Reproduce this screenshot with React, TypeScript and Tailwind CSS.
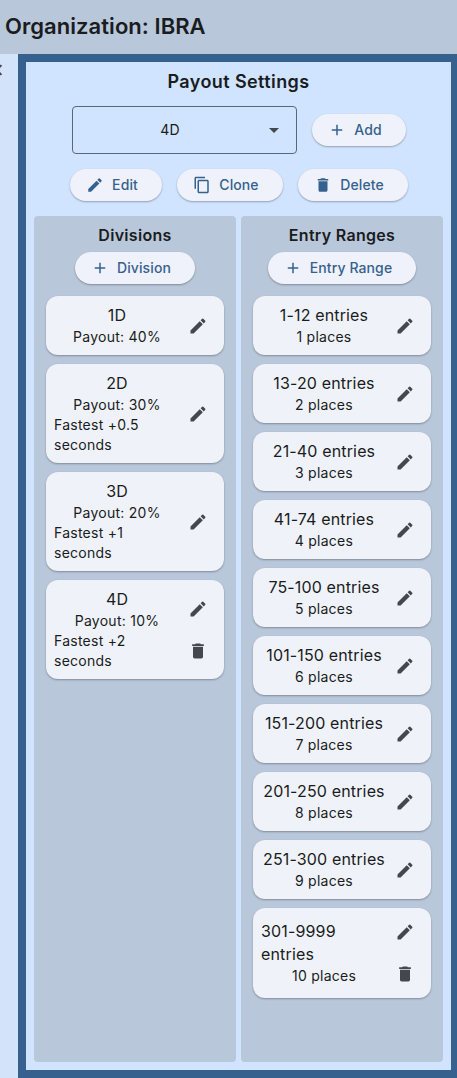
import { MdAdd, MdArrowDropDown, MdChevronLeft, MdContentCopy, MdDelete, MdEdit } from 'react-icons/md';

type Division = { name: string; payout: string; fastest?: string; canDelete?: boolean };

const divisions: Division[] = [
  { name: '1D', payout: 'Payout: 40%' },
  { name: '2D', payout: 'Payout: 30%', fastest: 'Fastest +0.5 seconds' },
  { name: '3D', payout: 'Payout: 20%', fastest: 'Fastest +1 seconds' },
  { name: '4D', payout: 'Payout: 10%', fastest: 'Fastest +2 seconds', canDelete: true },
];

const ranges = [
  ['1-12 entries', '1 places'],
  ['13-20 entries', '2 places'],
  ['21-40 entries', '3 places'],
  ['41-74 entries', '4 places'],
  ['75-100 entries', '5 places'],
  ['101-150 entries', '6 places'],
  ['151-200 entries', '7 places'],
  ['201-250 entries', '8 places'],
  ['251-300 entries', '9 places'],
];

function PillButton({ icon, label, className }: { icon: React.ReactNode; label: string; className: string }) {
  return (
    <button
      className={`flex h-[32px] items-center justify-center rounded-full bg-[#eff2fa] pb-[1px] pr-[8px] text-[14px] font-medium tracking-[0.1px] text-[#36618e] shadow-[0_1px_2px_rgba(0,0,0,0.3)] ${className}`}
    >
      {icon}
      {label}
    </button>
  );
}

function CardActions({ canDelete }: { canDelete?: boolean }) {
  return (
    <div className="flex w-[24px] shrink-0 flex-col items-center gap-[22px] py-[6px] text-[#43474e]">
      <MdEdit size={20} />
      {canDelete && <MdDelete size={20} />}
    </div>
  );
}

function DivisionCard({ division }: { division: Division }) {
  return (
    <div className="flex items-center rounded-[12px] bg-[#f0f2fa] py-[8px] pl-[8px] pr-[14px] text-[#191c20] shadow-[0_1px_2px_rgba(0,0,0,0.3)]">
      <div className="min-w-0 flex-1 pr-[6px]">
        <div className="text-center text-[16px] leading-[23px] tracking-[0.15px]">{division.name}</div>
        <div className="text-center text-[14px] leading-[20px] tracking-[0.25px]">{division.payout}</div>
        {division.fastest && <div className="text-[14px] leading-[20px] tracking-[0.25px]">{division.fastest}</div>}
      </div>
      <CardActions canDelete={division.canDelete} />
    </div>
  );
}

function RangeCard({ title, places, canDelete }: { title: string; places: string; canDelete?: boolean }) {
  return (
    <div className="flex items-center rounded-[12px] bg-[#f0f2fa] py-[8px] pl-[8px] pr-[14px] text-[#191c20] shadow-[0_1px_2px_rgba(0,0,0,0.3)]">
      <div className="min-w-0 flex-1 pr-[6px]">
        <div className={`${canDelete ? 'text-left' : 'text-center'} text-[16px] leading-[23px] tracking-[0.15px]`}>{title}</div>
        <div className="text-center text-[14px] leading-[20px] tracking-[0.25px]">{places}</div>
      </div>
      <CardActions canDelete={canDelete} />
    </div>
  );
}

export default function App() {
  return (
    <div className="flex h-[1078px] w-[457px] flex-col overflow-hidden bg-[#d3e3fa] font-['Inter',sans-serif] text-[#191c20]">
      <header className="flex h-[54px] shrink-0 items-center bg-[#b9c7da] pb-[1px] pl-[5px]">
        <h1 className="text-[22px] font-semibold tracking-[0.05px]">Organization: IBRA</h1>
      </header>
      <div className="flex min-h-0 flex-1">
        <div className="w-[18px] shrink-0 overflow-hidden pt-[5px]">
          <MdChevronLeft size={22} className="ml-[-12px] text-[#43474e]" />
        </div>
        <main className="flex w-[441px] shrink-0 flex-col border-[8px] border-[#36618e] bg-[#d1e4ff] pb-[8px]">
          <h2 className="mt-[8px] text-center text-[18px] font-semibold leading-[24px] tracking-[0.4px]">Payout Settings</h2>
          <div className="mt-[12px] flex items-center pl-[46px]">
            <div className="relative flex h-[48px] w-[225px] items-center justify-center rounded-[4px] border border-[#5b6779] pb-[1px] pr-[29px] text-[14px] tracking-[0.25px] text-[#191c20]">
              4D
              <MdArrowDropDown size={24} className="absolute right-[10px] text-[#43474e]" />
            </div>
            <PillButton icon={<MdAdd size={18} className="mr-[8px]" />} label="Add" className="ml-[15px] w-[94px]" />
          </div>
          <div className="mt-[15px] flex items-center pl-[44px]">
            <PillButton icon={<MdEdit size={18} className="mr-[8px]" />} label="Edit" className="w-[92px]" />
            <PillButton icon={<MdContentCopy size={18} className="mr-[8px]" />} label="Clone" className="ml-[15px] w-[106px]" />
            <PillButton icon={<MdDelete size={18} className="mr-[8px]" />} label="Delete" className="ml-[15px] w-[110px]" />
          </div>
          <div className="mt-[15px] flex min-h-0 flex-1 gap-[5px] px-[8px]">
            <section className="flex w-[202px] flex-col rounded-[4px] bg-[#b9c7da] px-[12px] pt-[8px]">
              <h3 className="text-center text-[16px] font-semibold leading-[22px] tracking-[0.3px]">Divisions</h3>
              <PillButton icon={<MdAdd size={18} className="mr-[8px]" />} label="Division" className="mx-auto mt-[6px] w-[120px]" />
              <div className="mt-[12px] flex flex-col gap-[9px]">
                {divisions.map((d) => (
                  <DivisionCard key={d.name} division={d} />
                ))}
              </div>
            </section>
            <section className="flex w-[202px] flex-col rounded-[4px] bg-[#b9c7da] px-[12px] pt-[8px]">
              <h3 className="text-center text-[16px] font-semibold leading-[22px] tracking-[0.3px]">Entry Ranges</h3>
              <PillButton icon={<MdAdd size={18} className="mr-[8px]" />} label="Entry Range" className="mx-auto mt-[6px] w-[148px]" />
              <div className="mt-[12px] flex flex-col gap-[9px]">
                {ranges.map(([title, places]) => (
                  <RangeCard key={title} title={title} places={places} />
                ))}
                <RangeCard title="301-9999 entries" places="10 places" canDelete />
              </div>
            </section>
          </div>
        </main>
      </div>
    </div>
  );
}
